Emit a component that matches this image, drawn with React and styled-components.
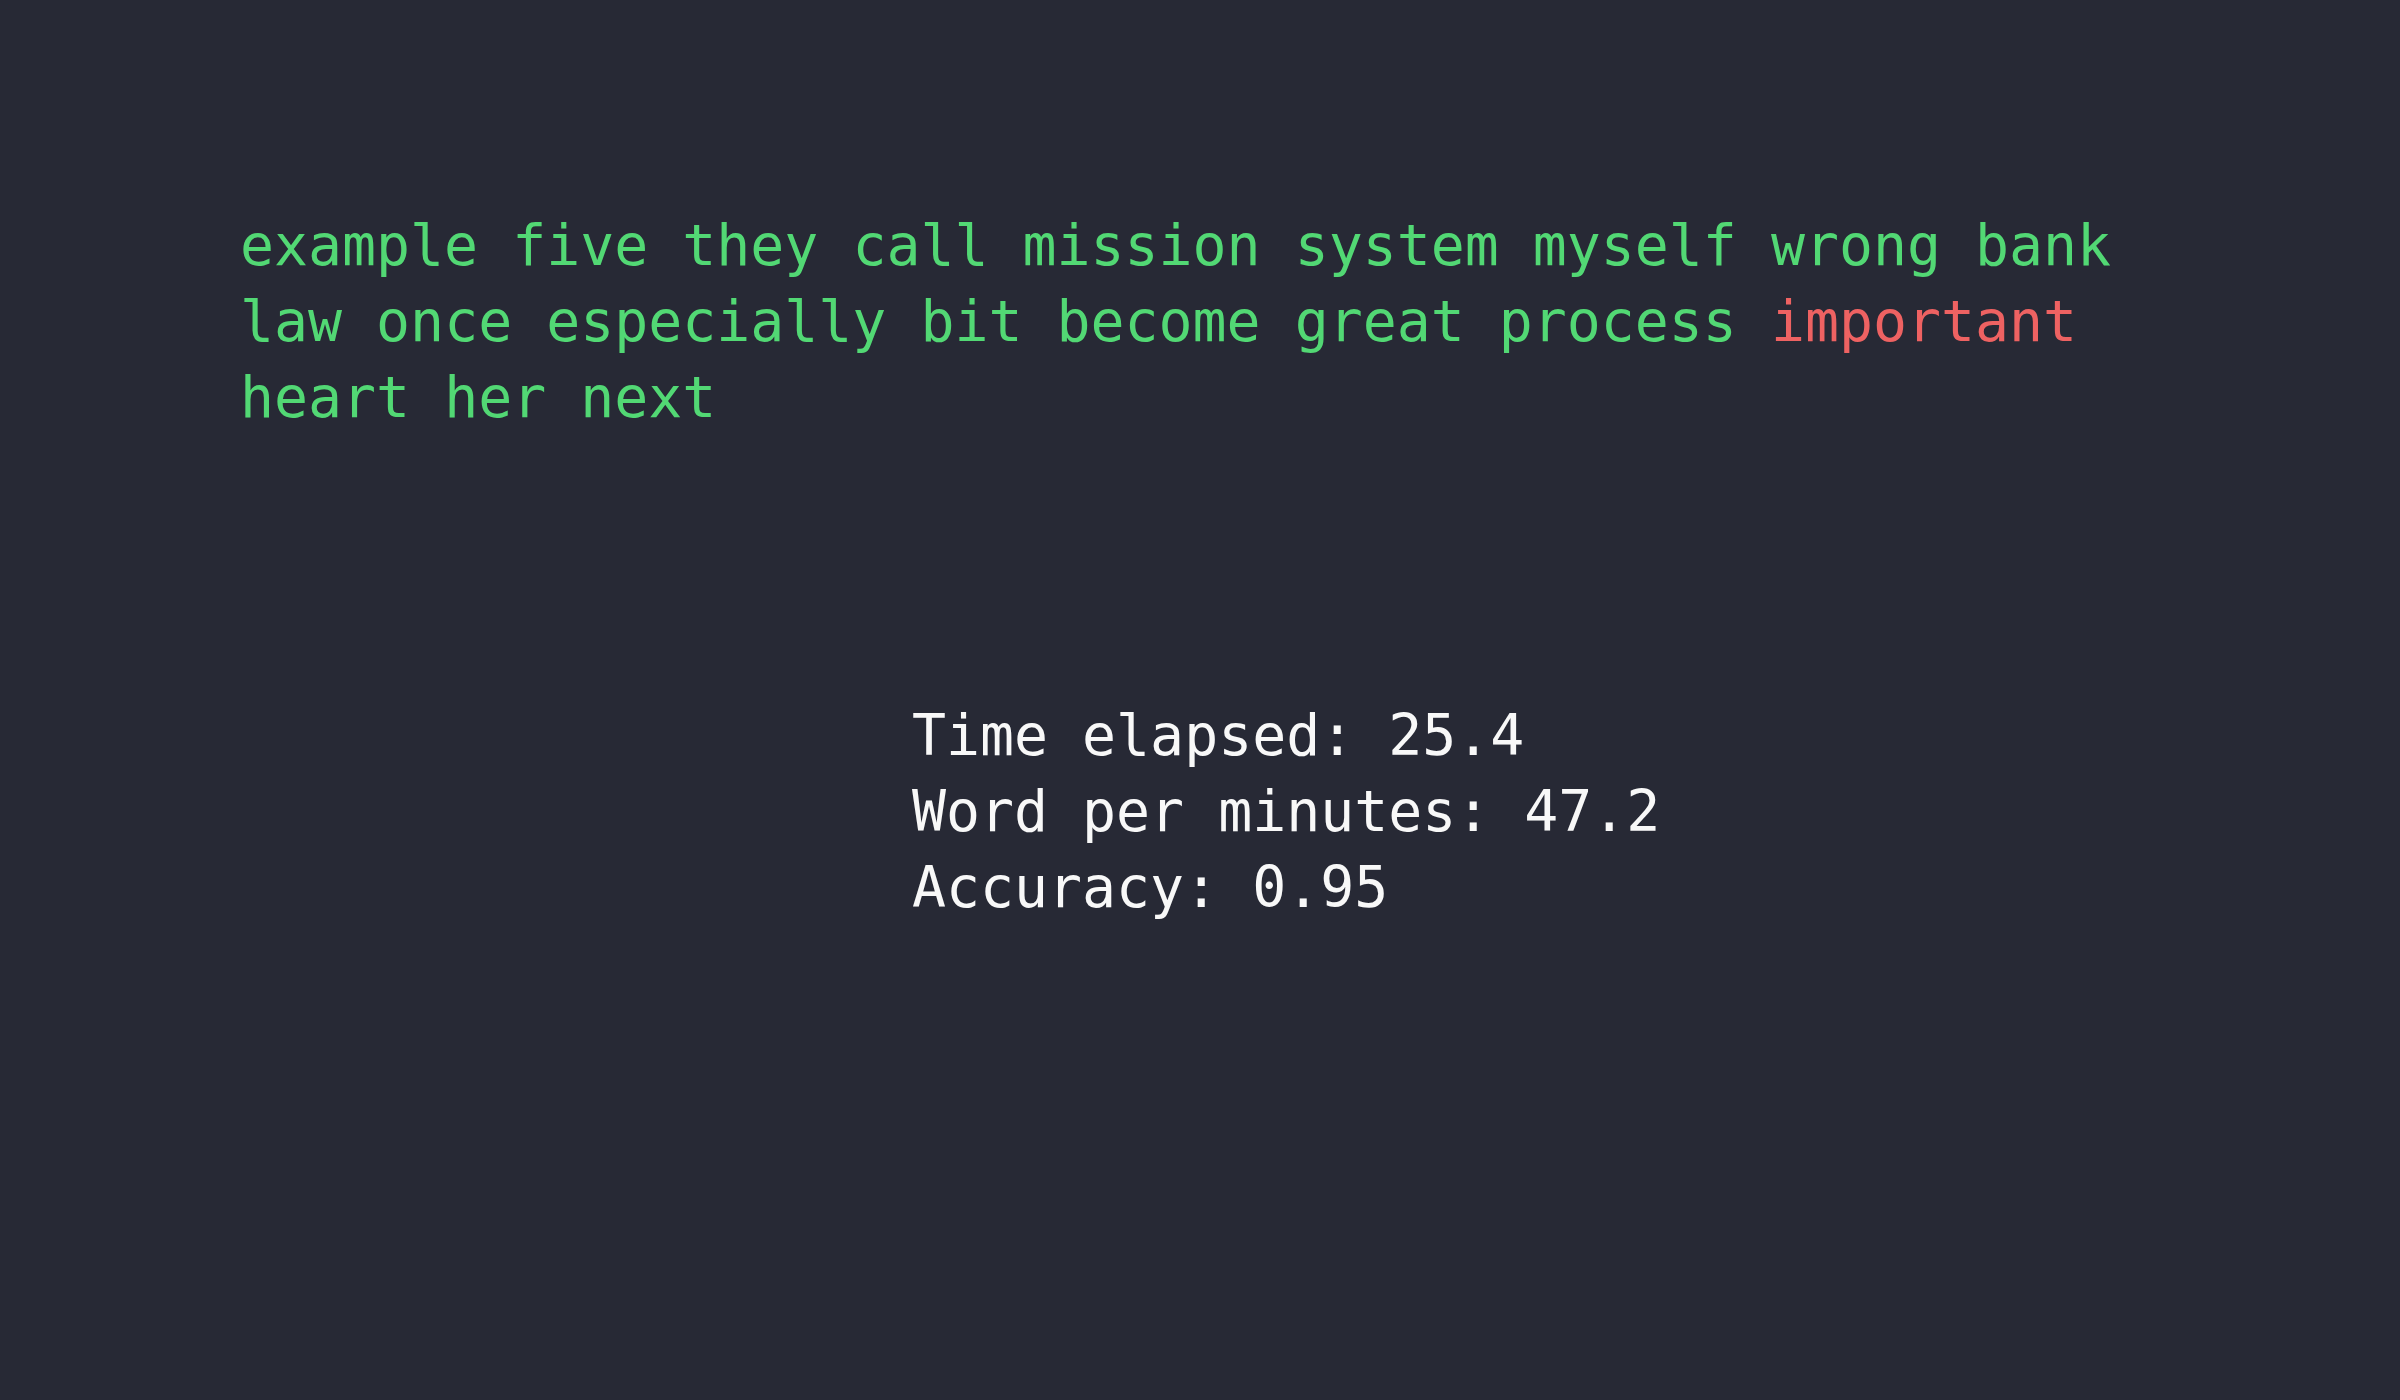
import React from "react";
import styled, { createGlobalStyle } from "styled-components";

const GlobalStyle = createGlobalStyle`
  html, body {
    margin: 0;
    padding: 0;
    background: #272935;
  }
  body {
    font-family: "DejaVu Sans Mono", "Liberation Mono", monospace;
  }
`;

const Page = styled.main`
  width: 100%;
  min-height: 1400px;
  background: #272935;
  display: flex;
  flex-direction: column;
  align-items: center;
  padding-top: 208px;
  box-sizing: border-box;
`;

const WordsBox = styled.div`
  width: 80%;
  font-size: 56.5px;
  line-height: 76px;
  color: #52d874;
  word-spacing: 0;
`;

const Word = styled.span`
  color: ${(props) => (props.$wrong ? "#ee6262" : "#52d874")};
`;

const Stats = styled.div`
  width: 100%;
  box-sizing: border-box;
  padding-left: 912px;
  margin-top: 262px;
  font-size: 56.5px;
  line-height: 76px;
  color: #f8f8f8;
`;

const StatLine = styled.div`
  white-space: pre;
`;

const words = [
  "example", "five", "they", "call", "mission", "system", "myself", "wrong", "bank",
  "law", "once", "especially", "bit", "become", "great", "process", "important",
  "heart", "her", "next",
];

const wrong = ["important"];

export default function App() {
  return (
    <>
      <GlobalStyle />
      <Page>
        <WordsBox>
          {words.map((w, i) => (
            <React.Fragment key={i}>
              <Word $wrong={wrong.includes(w)}>{w}</Word>
              {i < words.length - 1 ? " " : ""}
            </React.Fragment>
          ))}
        </WordsBox>
        <Stats>
          <StatLine>Time elapsed: 25.4</StatLine>
          <StatLine>Word per minutes: 47.2</StatLine>
          <StatLine>Accuracy: 0.95</StatLine>
        </Stats>
      </Page>
    </>
  );
}
